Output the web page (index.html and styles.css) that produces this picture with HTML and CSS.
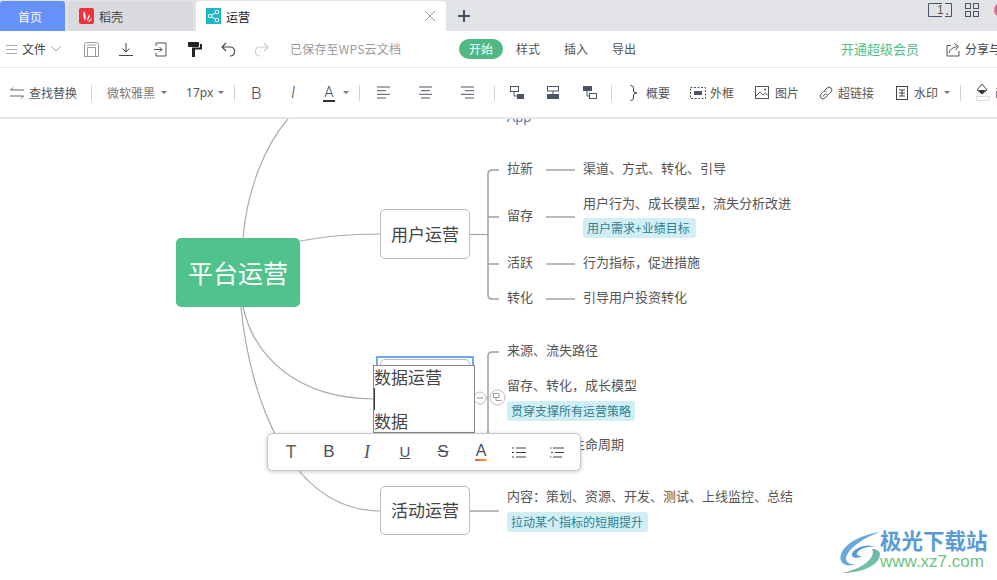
FILE: index.html
```html
<!DOCTYPE html>
<html lang="zh">
<head>
<meta charset="utf-8">
<title>运营</title>
<link rel="stylesheet" href="styles.css">
</head>
<body>
<header class="tabbar">
  <div class="tab tab-home">首页</div>
  <div class="tab tab-doc">
    <svg class="tab-icon" viewBox="0 0 15 16"><rect width="15" height="16" rx="2" fill="#f0323c"/><path d="M5 3C4 6 4 9 6 13C7 10 7 6 5 3ZM8 13C8 10 9 8 11 6C11 9 10 11 8 13ZM9 14C10 12 12 11 13 10C13 12 11 14 9 14Z" fill="#fff"/></svg>
    <span>稻壳</span>
  </div>
  <div class="tab tab-active">
    <svg class="tab-icon" viewBox="0 0 15 16"><rect width="15" height="16" fill="#1fb5c4"/><g fill="none" stroke="#fff" stroke-width="1"><circle cx="4" cy="8" r="1.8"/><circle cx="11" cy="4" r="1.8"/><circle cx="11" cy="12" r="1.8"/><path d="M5.6 7L9.4 5M5.6 9L9.4 11"/></g></svg>
    <span class="tab-title">运营</span>
    <svg class="tab-close" viewBox="0 0 12 12"><path d="M1 1L11 11M11 1L1 11" stroke="#8d95a6" fill="none"/></svg>
  </div>
  <svg class="tab-add" viewBox="0 0 12 12"><path d="M6 0V12M0 6H12" stroke="#454f63" stroke-width="2" fill="none"/></svg>
  <div class="win-icons">
    <svg class="win-screen" viewBox="0 0 24 14"><path d="M14 .5H.5V13.5H14M17 .5H23.5V13.5H17" fill="none" stroke="#4a5568"/><rect x="18.5" y="10.5" width="1.5" height="1.5" fill="#4a5568"/></svg>
    <span class="win-num">1</span>
    <svg class="win-grid" viewBox="0 0 14 14"><g fill="none" stroke="#4a5568"><rect x=".5" y=".5" width="5" height="5"/><rect x="8.5" y=".5" width="5" height="5"/><rect x=".5" y="8.5" width="5" height="5"/><rect x="8.5" y="8.5" width="5" height="5"/></g></svg>
    <span class="win-avatar"></span>
  </div>
</header>

<nav class="menubar">
  <svg class="ico w11 ml-0" viewBox="0 0 11 11"><path d="M0 1.5H11M0 5.5H11M0 9.5H11" stroke="#aaa" fill="none"/></svg>
  <span class="t12 dark ml-5">文件</span>
  <svg class="ico w10 ml-5" viewBox="0 0 10 6"><path d="M.5 .5L5 5L9.500 .5" stroke="#aaa" fill="none"/></svg>
  <svg class="ico w15 h15 ml-23" viewBox="0 0 15 15"><path d="M.5 2.500Q.5 .5 2.500 .5H12.500Q14.500 .5 14.500 2.500V14.500H.5ZM3.500 14.500V5.500H11.500V14.500M3 3H12" fill="none" stroke="#999"/></svg>
  <svg class="ico w14 h15 ml-20" viewBox="0 0 14 15"><path d="M7 1V10M3.500 6.500L7 10L10.500 6.500" fill="none" stroke="#444"/><path d="M0 13.500H14" stroke="#444"/></svg>
  <svg class="ico w14 h15 ml-20" viewBox="0 0 14 15"><path d="M3 1H13V14H3V11M3 4V1" fill="none" stroke="#555"/><path d="M1 7.500H9M6.500 5L9 7.500L6.500 10" fill="none" stroke="#555"/></svg>
  <svg class="ico w14 h15 ml-21" viewBox="0 0 14 15"><path d="M0 1Q0 0 1 0H10Q11 0 11 1V4Q11 5 10 5H1Q0 5 0 4Z" fill="#222"/><path d="M11 2H14V7.500H7V15H4V5.500H12V2Z" fill="#222"/></svg>
  <svg class="ico w14 h15 ml-19" viewBox="0 0 14 15"><path d="M5 1L1 5L5 9M1 5H9Q13.500 5 13.500 9.500Q13.500 14 9 14" fill="none" stroke="#444" stroke-width="1.100"/></svg>
  <svg class="ico w14 h15 ml-20" viewBox="0 0 14 15"><path d="M9 1L13 5L9 9M13 5H5Q.5 5 .5 9.500Q.5 14 5 14" fill="none" stroke="#ccc" stroke-width="1.100"/></svg>
  <span class="t12 muted ml-21 saved">已保存至WPS云文档</span>
  <span class="pill ml-58">开始</span>
  <span class="t12 body ml-13">样式</span>
  <span class="t12 body ml-24">插入</span>
  <span class="t12 body ml-24">导出</span>
  <span class="t13 vip ml-205">开通超级会员</span>
  <svg class="ico w14 h15 ml-27" viewBox="0 0 14 15"><path d="M5 3.500H1V14H13V9" fill="none" stroke="#555"/><path d="M3 11Q4 6 11 4.500M8.500 1.500L12.500 4.500L9.500 8" fill="none" stroke="#555"/></svg>
  <span class="t12 dark ml-5 nowrap">分享与协作</span>
</nav>

<nav class="toolbar">
  <svg class="ico w14 h12" viewBox="0 0 14 12"><path d="M3 .5L.5 3H14M11 11.500L13.500 9H0" fill="none" stroke="#666"/></svg>
  <span class="t12 body ml-5">查找替换</span>
  <i class="sep ml-14"></i>
  <span class="t12 muted2 ml-15">微软雅黑</span>
  <i class="caret ml-6"></i>
  <span class="t12 body px ml-19">17px</span>
  <i class="caret ml-7"></i>
  <i class="sep ml-10"></i>
  <span class="glyph gb ml-16">B</span>
  <span class="glyph gi ml-27">I</span>
  <span class="glyph ga ml-25">A</span>
  <i class="caret ml-8"></i>
  <i class="sep ml-10"></i>
  <svg class="ico w13 h13 ml-17" viewBox="0 0 13 13"><path d="M0 1H13M0 4.700H9M0 8.300H13M0 12H9" stroke="#4a5568" fill="none"/></svg>
  <svg class="ico w13 h13 ml-29" viewBox="0 0 13 13"><path d="M0 1H13M2 4.700H11M0 8.300H13M2 12H11" stroke="#4a5568" fill="none"/></svg>
  <svg class="ico w13 h13 ml-29" viewBox="0 0 13 13"><path d="M0 1H13M4 4.700H13M0 8.300H13M4 12H13" stroke="#4a5568" fill="none"/></svg>
  <i class="sep ml-20"></i>
  <svg class="ico w14 h13 ml-15" viewBox="0 0 14 13"><rect x=".5" y=".5" width="8" height="5" fill="none" stroke="#4a5568"/><path d="M4 6V10H7" fill="none" stroke="#4a5568"/><rect x="7" y="8" width="7" height="5" fill="#4a5568"/></svg>
  <svg class="ico w14 h13 ml-22" viewBox="0 0 14 13"><rect x="1.500" y=".5" width="11" height="4.500" fill="none" stroke="#4a5568"/><path d="M7 5V8" stroke="#4a5568"/><rect x="1" y="8" width="12" height="5" fill="#4a5568"/></svg>
  <svg class="ico w14 h13 ml-23" viewBox="0 0 14 13"><rect width="9" height="5" fill="#4a5568"/><path d="M4 5V10H7" fill="none" stroke="#4a5568"/><rect x="6.500" y="7.500" width="7" height="5" fill="none" stroke="#4a5568"/></svg>
  <i class="sep ml-14"></i>
  <svg class="ico w8 h16 ml-18" viewBox="0 0 8 16"><path d="M.5 .5Q3.500 .5 3.500 3V6Q3.500 8 7 8Q3.500 8 3.500 10V13Q3.500 15.500 .5 15.500" fill="none" stroke="#444"/></svg>
  <span class="t12 body ml-8">概要</span>
  <svg class="ico w16 h12 ml-20" viewBox="0 0 16 12"><rect x=".5" y=".5" width="15" height="11" fill="none" stroke="#555" stroke-dasharray="2 1.500"/><rect x="4" y="4" width="8" height="4" fill="#4a5568"/></svg>
  <span class="t12 body ml-4">外框</span>
  <svg class="ico w14 h13 ml-21" viewBox="0 0 14 13"><rect x=".5" y=".5" width="13" height="12" fill="none" stroke="#555"/><path d="M1 10L5 6L8 9L10.500 7L13 9.500" fill="none" stroke="#555"/><circle cx="10" cy="3.500" r="1" fill="#555"/></svg>
  <span class="t12 body ml-6">图片</span>
  <svg class="ico w14 h14 ml-20" viewBox="0 0 14 14"><g fill="none" stroke="#555"><path d="M6 8L4 10.500"/><path d="M5.500 4.500L8 2Q10 0 12 2Q14 4 12 6L9.500 8.500Q8 9.500 6.500 8"/><path d="M8.500 9.500L6 12Q4 14 2 12Q0 10 2 8L4.500 5.500Q6 4.500 7.500 6"/></g></svg>
  <span class="t12 body ml-5">超链接</span>
  <svg class="ico w12 h14 ml-22" viewBox="0 0 12 14"><rect x=".5" y=".5" width="11" height="13" fill="none" stroke="#444"/><path d="M3 4H9M3 7H9M6 4V10M3 10H9" stroke="#444" fill="none"/></svg>
  <span class="t12 body ml-6">水印</span>
  <i class="caret ml-6"></i>
  <i class="sep ml-10"></i>
  <svg class="ico w14 h17 ml-15" viewBox="0 0 14 17"><path d="M6 0L1 6L6 10L11 6Z" fill="none" stroke="#444"/><path d="M2 6H10L6 10Z" fill="#333"/><rect x=".5" y="12.500" width="13" height="4" fill="none" stroke="#ddd"/></svg>
  <span class="t12 body ml-5 nowrap">画布</span>
</nav>

<main class="canvas">
  <svg class="links" viewBox="0 119 997 461">
    <g fill="none" stroke="#aaa" stroke-width="1.200">
      <path d="M243 238C247 190 265 145 288 119"/>
      <path d="M300 241C325 236 350 234 380 234"/>
      <path d="M243 307C255 360 300 398 373 399"/>
      <path d="M241 307C250 400 290 510 380 511"/>
    </g>
    <g fill="none" stroke="#999">
      <path d="M470 234.500H488"/>
      <path d="M475 398H488"/>
    </g>
    <g fill="none" stroke="#a0a0a0" stroke-width="1.500">
      <path d="M499 170H492Q488 170 488 174V295Q488 299 492 299H499M488 217H499M488 264H499"/>
      <path d="M499 352H492Q488 352 488 356V440"/>
    </g>
    <g fill="none" stroke="#bbb" stroke-width="2">
      <path d="M546 170H575M546 217H575M546 264H575M546 299H575"/>
      <path d="M470 511H499"/>
    </g>
    <g fill="#fff" stroke="#bbb">
      <circle cx="480" cy="398" r="6"/>
      <circle cx="497.500" cy="397.500" r="7.500"/>
    </g>
    <path d="M477 398H483" stroke="#888" fill="none"/>
    <path d="M493.500 393.500H499V397.500H493.500ZM496 397.500V400.500H501.500" stroke="#999" fill="none"/>
  </svg>

  <div class="node root">平台运营</div>
  <div class="node sub n-user">用户运营</div>
  <div class="select-box"><div class="node sub n-data"></div></div>
  <div class="node sub n-act">活动运营</div>

  <span class="leaf app">App</span>
  <span class="leaf x507 y-a">拉新</span>
  <span class="leaf x507 y-b">留存</span>
  <span class="leaf x507 y-c">活跃</span>
  <span class="leaf x507 y-d">转化</span>
  <span class="leaf x584 y-a">渠道、方式、转化、引导</span>
  <span class="leaf x584 y-e">用户行为、成长模型，流失分析改进</span>
  <span class="tag tag-a">用户需求+业绩目标</span>
  <span class="leaf x584 y-c">行为指标，促进措施</span>
  <span class="leaf x584 y-d">引导用户投资转化</span>

  <span class="leaf x507 y-f">来源、流失路径</span>
  <span class="leaf x507 y-g">留存、转化，成长模型</span>
  <span class="tag tag-b">贯穿支撑所有运营策略</span>
  <span class="leaf x507 y-h">用户分层、生命周期</span>
  <span class="leaf x507 y-i">内容：策划、资源、开发、测试、上线监控、总结</span>
  <span class="tag tag-c">拉动某个指标的短期提升</span>

  <div class="editor">
    <div class="ed-line">数据运营</div>
    <div class="ed-line"><i class="cursor"></i></div>
    <div class="ed-line">数据</div>
  </div>

  <div class="fmt">
    <span class="fmt-btn fmt-t">T</span>
    <span class="fmt-btn">B</span>
    <span class="fmt-btn fmt-i">I</span>
    <span class="fmt-btn fmt-u">U</span>
    <span class="fmt-btn fmt-s">S</span>
    <span class="fmt-btn fmt-a">A</span>
    <span class="fmt-btn"><svg class="fmt-ico" viewBox="0 0 14 11"><path d="M4 1H14M4 5.500H14M4 10H14M0 1H2M0 5.500H2M0 10H2" stroke="#444" stroke-width="1.200" fill="none"/></svg></span>
    <span class="fmt-btn"><svg class="fmt-ico" viewBox="0 0 14 11"><path d="M3 1H14M5 5.500H14M3 10H12M0 1H1.500M1 5.500H3M0 10H1.500" stroke="#444" stroke-width="1.200" fill="none"/></svg></span>
  </div>

  <div class="wm">
    <svg class="wm-logo" viewBox="0 0 44 44">
      <defs>
        <linearGradient id="wg" x1="0" y1="0" x2="1" y2="1"><stop offset="0" stop-color="#5b9bd5"/><stop offset="1" stop-color="#7fd08a"/></linearGradient>
      </defs>
      <path d="M42 2C24 5 8 12 3 24C0 33 8 38 18 34C10 35 6 31 9 25C14 15 28 7 42 2Z" fill="#6aa8dc"/>
      <path d="M37 17C30 13 16 17 14 24C13 28 19 29 24 26C20 26 18 25 19 23C21 19 30 16 37 17Z" fill="#5b9bd5"/>
      <path d="M34 19C38 26 28 38 4 43C22 43 42 36 42 24C42 21 38 19 34 19Z" fill="url(#wg)"/>
    </svg>
    <div class="wm-text">
      <div class="wm-cn">极光下载站</div>
      <div class="wm-en">www.xz7.com</div>
    </div>
  </div>
</main>
</body>
</html>
```

FILE: styles.css
```css
* { box-sizing: border-box; }
html, body { margin: 0; padding: 0; }
body {
  width: 997px;
  height: 580px;
  overflow: hidden;
  background: #fff;
  font-family: "Noto Sans CJK SC", "Liberation Sans", sans-serif;
  color: #555;
}
.tabbar {
  height: 31px;
  display: flex;
  align-items: flex-end;
  background: #e1e3e7;
  position: relative;
}
.tab {
  height: 30px;
  display: flex;
  align-items: center;
  font-size: 12px;
  border-radius: 3px 3px 0 0;
}
.tab-home {
  width: 65px;
  padding-right: 5px;
  justify-content: center;
  background: #6690fb;
  color: #fff;
}
.tab-doc {
  width: 125px;
  margin-left: 3px;
  padding-left: 11px;
  background: #d9dadd;
  color: #444;
}
.tab-active {
  width: 250px;
  margin-left: 3px;
  padding-left: 10px;
  background: #fff;
  color: #222;
}
.tab-icon { width: 15px; height: 16px; margin-right: 5px; flex: none; }
.tab-title { flex: 1; }
.tab-close { width: 12px; height: 12px; margin-right: 10px; }
.tab-add { width: 12px; height: 12px; margin: 0 0 9px 12px; }
.win-icons {
  position: absolute;
  top: 3px;
  left: 928px;
  display: flex;
  align-items: flex-start;
}
.win-screen { width: 24px; height: 14px; flex: none; }
.win-num {
  position: absolute;
  left: 9px;
  top: 0;
  font: 12px/14px "Liberation Sans", sans-serif;
  color: #555;
}
.win-grid { width: 14px; height: 14px; margin-left: 13px; flex: none; }
.win-avatar {
  width: 14px;
  height: 14px;
  margin-left: 15px;
  border-radius: 50%;
  background: #ef5f8f;
  flex: none;
}

.menubar {
  height: 37px;
  display: flex;
  align-items: center;
  padding-left: 6px;
  border-bottom: 1px solid #ececec;
  overflow: hidden;
}
.toolbar {
  height: 51px;
  display: flex;
  align-items: center;
  padding-left: 10px;
  border-bottom: 2px solid #e6e6e6;
  overflow: hidden;
}
.ico { display: block; flex: none; overflow: visible; }
.w8 { width: 8px; } .w10 { width: 10px; height: 6px; } .w11 { width: 11px; height: 11px; }
.w12 { width: 12px; } .w13 { width: 13px; } .w14 { width: 14px; } .w15 { width: 15px; } .w16 { width: 16px; }
.h12 { height: 12px; } .h13 { height: 13px; } .h14 { height: 14px; } .h15 { height: 15px; } .h16 { height: 16px; } .h17 { height: 17px; }

.t12 { font-size: 12px; line-height: 18px; flex: none; }
.t13 { font-size: 13px; line-height: 18px; flex: none; }
.nowrap { white-space: nowrap; }
.dark { color: #444; }
.body { color: #555; }
.muted { color: #999; }
.muted2 { color: #777; }
.vip { color: #4fbf84; }
.saved { width: 111px; white-space: nowrap; letter-spacing: .2px; }
.px { width: 25px; font-family: "Noto Sans", sans-serif; }
.pill {
  width: 44px;
  height: 20px;
  flex: none;
  border-radius: 10px;
  background: #50b883;
  color: #fff;
  font-size: 12px;
  line-height: 20px;
  text-align: center;
}
.sep { display: block; flex: none; width: 1px; height: 16px; background: #d4d4d4; }
.caret {
  display: block;
  flex: none;
  width: 6px;
  height: 3px;
  border-left: 3px solid transparent;
  border-right: 3px solid transparent;
  border-top: 3px solid #777;
}
.glyph {
  flex: none;
  font-family: "Roboto", "Liberation Sans", sans-serif;
  font-weight: 300;
  color: #444c5c;
  text-align: center;
  line-height: 18px;
}
.gb { width: 10px; font-size: 17px; }
.gi { width: 10px; font-size: 16px; font-style: italic; }
.ga { width: 12px; font-size: 15px; border-bottom: 2px solid #333; line-height: 15px; margin-top: 2px; }

.ml-0 { margin-left: 0; } .ml-4 { margin-left: 4px; } .ml-5 { margin-left: 5px; } .ml-6 { margin-left: 6px; }
.ml-7 { margin-left: 7px; } .ml-8 { margin-left: 8px; } .ml-10 { margin-left: 10px; } .ml-13 { margin-left: 13px; }
.ml-14 { margin-left: 14px; } .ml-15 { margin-left: 15px; } .ml-16 { margin-left: 16px; } .ml-17 { margin-left: 17px; } .ml-18 { margin-left: 18px; }
.ml-19 { margin-left: 19px; } .ml-20 { margin-left: 20px; } .ml-21 { margin-left: 21px; } .ml-22 { margin-left: 22px; }
.ml-23 { margin-left: 23px; } .ml-24 { margin-left: 24px; } .ml-25 { margin-left: 25px; } .ml-27 { margin-left: 27px; }
.ml-29 { margin-left: 29px; } .ml-58 { margin-left: 58px; } .ml-205 { margin-left: 205px; }

/* Free canvas: the place of each node is the content of the mind map. */
.canvas {
  position: relative;
  height: 461px;
  overflow: hidden;
  background: #fff;
}
.links { position: absolute; left: 0; top: 0; width: 997px; height: 461px; }
.node {
  position: absolute;
  display: flex;
  align-items: center;
  justify-content: center;
  padding-bottom: 2px;
  border-radius: 5px;
}
.root {
  left: 176px; top: 119px; width: 124px; height: 69px;
  background: #50c28b;
  color: #fff;
  font-size: 25px;
}
.sub {
  width: 90px;
  background: #fff;
  border: 1px solid #bbb;
  color: #444;
  font-size: 17px;
}
.n-user { left: 380px; top: 90px; height: 50px; }
.n-act { left: 380px; top: 367px; height: 49px; }
.select-box {
  position: absolute;
  left: 376px; top: 237px; width: 98px; height: 78px;
  border: 2px solid #6aa9f5;
}
.n-data { left: 2px; top: 1px; height: 72px; }

.leaf {
  position: absolute;
  font-size: 13px;
  line-height: 18px;
  color: #555;
  white-space: nowrap;
}
.app { left: 507px; top: -11px; color: #4a6fa5; font-family: "Noto Sans", sans-serif; }
.x507 { left: 507px; }
.x584 { left: 583px; }
.y-a { top: 40px; } .y-b { top: 87px; } .y-c { top: 134px; } .y-d { top: 169px; }
.y-e { top: 75px; } .y-f { top: 222px; } .y-g { top: 257px; } .y-h { top: 316px; } .y-i { top: 368px; }
.tag {
  position: absolute;
  height: 20px;
  padding: 0 4px;
  border-radius: 3px;
  background: #d2eef5;
  color: #2f7f92;
  font-size: 12px;
  line-height: 20px;
  white-space: nowrap;
}
.tag-a { left: 583px; top: 99px; width: 113px; }
.tag-b { left: 507px; top: 282px; }
.tag-c { left: 507px; top: 393px; width: 141px; }

.editor {
  position: absolute;
  left: 373px; top: 246px; width: 102px; height: 68px;
  background: #fff;
  border: 1px solid #888;
  color: #444;
  font-size: 17px;
}
.ed-line { height: 22px; line-height: 22px; }
.cursor { display: block; width: 1px; height: 22px; background: #333; }

.fmt {
  position: absolute;
  left: 267px; top: 314px; width: 314px; height: 38px;
  display: flex;
  align-items: center;
  padding-left: 4px;
  background: #fff;
  border: 1px solid #c4c4c4;
  border-radius: 5px;
  box-shadow: 0 1px 4px rgba(0, 0, 0, .2);
}
.fmt-btn {
  width: 38px;
  text-align: center;
  font-family: "Liberation Sans", sans-serif;
  font-size: 17px;
  line-height: 20px;
  color: #4a5160;
}
.fmt-t { color: #6f6048; font-size: 18px; }
.fmt-i { font-family: "Liberation Serif", serif; font-style: italic; font-size: 18px; }
.fmt-u { text-decoration: underline; font-size: 15px; }
.fmt-s { text-decoration: line-through; }
.fmt-a { line-height: 16px; font-size: 16px; }
.fmt-a::after {
  content: "";
  display: block;
  width: 12px;
  height: 2px;
  margin: 0 auto;
  background: linear-gradient(90deg, #e8543a, #f5b13d);
}
.fmt-ico { display: block; width: 14px; height: 11px; margin: 0 auto; }

.wm {
  position: absolute;
  left: 838px; top: 408px;
  display: flex;
  align-items: flex-start;
}
.wm-logo { width: 44px; height: 44px; flex: none; margin-top: 3px; }
.wm-text { margin-left: -2px; }
.wm-cn {
  font-size: 21.500px;
  font-weight: 700;
  line-height: 26px;
  color: #5b9bd5;
  white-space: nowrap;
}
.wm-en {
  font-family: "Liberation Sans", sans-serif;
  font-size: 17px;
  line-height: 18px;
  color: #6cc57f;
}
```
